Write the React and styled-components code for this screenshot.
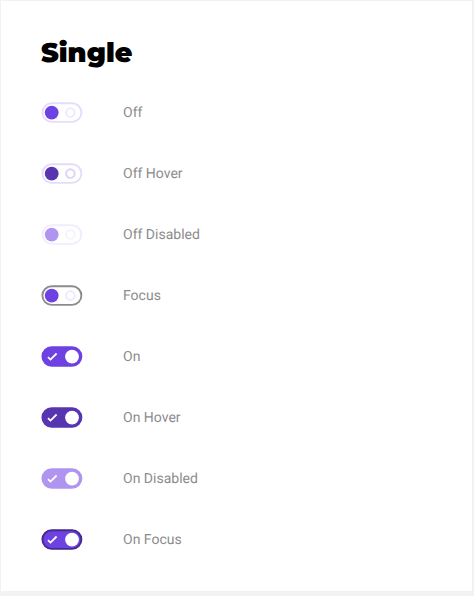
import React, { useState } from "react";
import styled, { createGlobalStyle } from "styled-components";

const GlobalStyle = createGlobalStyle`
  * { box-sizing: border-box; }
  body { margin: 0; background: #f2f2f2; text-rendering: geometricPrecision; }
`;

const Page = styled.main`
  padding: 1px 2px 5px 1px;
  background: #f2f2f2;
`;

const Panel = styled.section`
  padding: 36px 40px 41px;
  background: #ffffff;
`;

const Title = styled.h1`
  margin: 0 0 33px;
  font: 900 27px/32px Montserrat, Inter, sans-serif;
  color: #000000;
`;

const List = styled.div`
  display: flex;
  flex-direction: column;
  gap: 40px;
`;

const Row = styled.label`
  display: flex;
  align-items: flex-start;
  gap: 40px;
  height: 21px;
`;

const Toggle = styled.span`
  position: relative;
  flex: none;
  width: 42px;
  height: 21px;
`;

const Input = styled.input`
  position: absolute;
  inset: 0;
  width: 100%;
  height: 100%;
  margin: 0;
  opacity: 0;
`;

const Face = styled.svg`
  display: block;
  width: 100%;
  height: 100%;
  pointer-events: none;
`;

const Caption = styled.span`
  font: 400 14px/22px Roboto, sans-serif;
  color: #8c8c8c;
`;

const violet = "#6e41e2";
const deep = "#5835b0";
const pale = "#b095f0";

const OPTIONS = [
  { name: "Off", main: violet, border: "#e4dcfb", ring: "#eee9fc" },
  { name: "Off Hover", main: deep, border: "#e4dcfb", ring: "#dcd1f7" },
  { name: "Off Disabled", main: pale, border: "#f1edfd", ring: "#f6f3fe", disabled: true },
  { name: "Focus", main: violet, border: "#8c8c8c", ring: "#eee9fc" },
  { name: "On", main: violet, border: violet, on: true },
  { name: "On Hover", main: deep, border: deep, on: true },
  { name: "On Disabled", main: pale, border: pale, on: true, disabled: true },
  { name: "On Focus", main: violet, border: "#45298d", on: true },
];

function Switch({ name, main, border, ring = "#eee9fc", on = false, disabled }) {
  const [checked, setChecked] = useState(on);
  const edge = on === checked ? border : checked ? main : "#e4dcfb";
  return (
    <Row>
      <Toggle>
        <Input
          type="checkbox"
          role="switch"
          checked={checked}
          disabled={disabled}
          onChange={(e) => setChecked(e.target.checked)}
        />
        <Face viewBox="0 0 42 21" aria-hidden="true">
          <rect
            x="1.4" y="1.3" width="39" height="18.6" rx="9.3"
            fill={checked ? main : "#ffffff"} stroke={edge} strokeWidth="1.9"
          />
          {checked ? (
            <>
              <path d="M7 11.1L9.5 13.6L15.6 7.5" fill="none" stroke="#ffffff" strokeWidth="1.8" />
              <circle cx="31" cy="10.6" r="6.9" fill="#ffffff" />
            </>
          ) : (
            <>
              <circle cx="10.7" cy="10.6" r="6.9" fill={main} />
              <circle cx="29.4" cy="10.6" r="4.3" fill="none" stroke={ring} strokeWidth="1.9" />
            </>
          )}
        </Face>
      </Toggle>
      <Caption>{name}</Caption>
    </Row>
  );
}

export default function App() {
  return (
    <>
      <GlobalStyle />
      <Page>
        <Panel>
          <Title>Single</Title>
          <List>
            {OPTIONS.map((option) => (
              <Switch key={option.name} {...option} />
            ))}
          </List>
        </Panel>
      </Page>
    </>
  );
}
